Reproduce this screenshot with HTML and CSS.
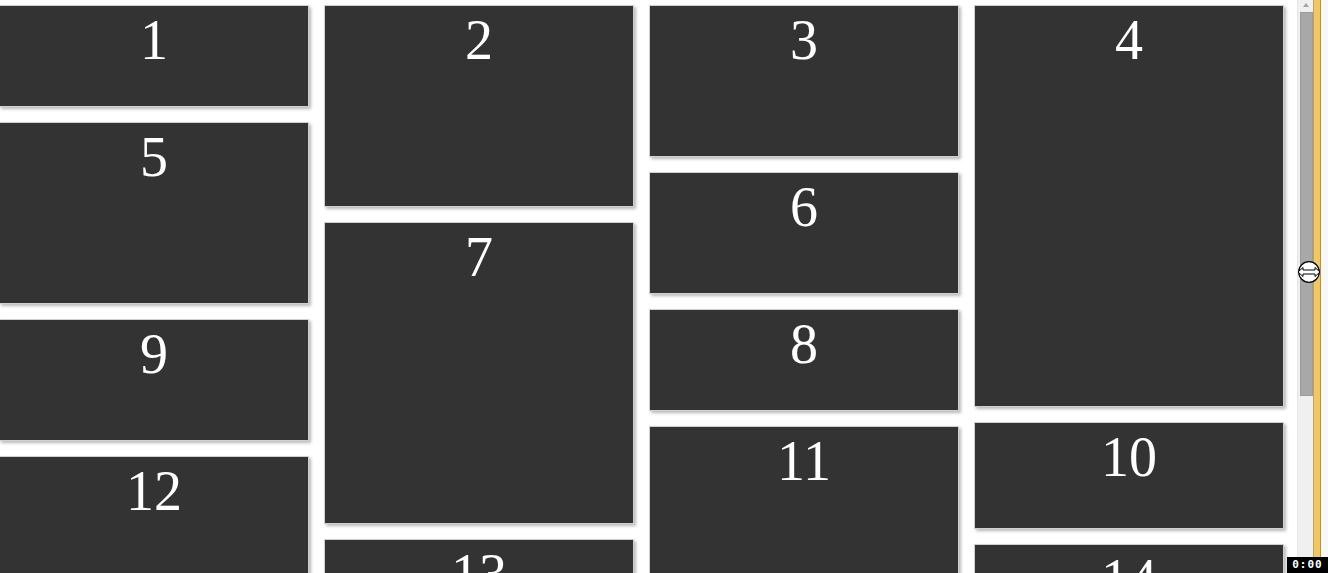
FILE: index.html
```html
<!DOCTYPE html>
<html lang="en">
<head>
<meta charset="UTF-8">
<meta name="viewport" content="width=device-width, initial-scale=1.0">
<title>Masonry Boxes</title>
<link rel="stylesheet" href="styles.css">
</head>
<body>
  <div class="screen">
    <div class="page">
      <div class="wall">
        <!-- column 1 -->
        <div class="col">
          <div class="box h100"><span class="num">1</span></div>
          <div class="box h180"><span class="num">5</span></div>
          <div class="box h120"><span class="num">9</span></div>
          <div class="box h150"><span class="num">12</span></div>
        </div>
        <!-- column 2 -->
        <div class="col">
          <div class="box h200"><span class="num">2</span></div>
          <div class="box h300"><span class="num">7</span></div>
          <div class="box h200"><span class="num">13</span></div>
        </div>
        <!-- column 3 -->
        <div class="col">
          <div class="box h150"><span class="num">3</span></div>
          <div class="box h120"><span class="num">6</span></div>
          <div class="box h100"><span class="num">8</span></div>
          <div class="box h200"><span class="num">11</span></div>
        </div>
        <!-- column 4 -->
        <div class="col">
          <div class="box h400"><span class="num">4</span></div>
          <div class="box h105"><span class="num">10</span></div>
          <div class="box h120"><span class="num">14</span></div>
        </div>
      </div>
    </div>

    <div class="scrollbar">
      <div class="arrow-up"></div>
      <div class="thumb"></div>
    </div>
    <div class="edge"></div>
    <div class="rest"></div>

    <!-- resize cursor over the scrollbar -->
    <svg class="cursor" width="24" height="22" viewBox="0 0 24 22">
      <circle cx="12" cy="11" r="10.3" fill="#fff" stroke="#000" stroke-width="1.2"/>
      <path d="M1 11 L6 6.5 L6 9 L18 9 L18 6.5 L23 11 L18 15.5 L18 13 L6 13 L6 15.5 Z" fill="#fff" stroke="#000" stroke-width="1" stroke-linejoin="round"/>
    </svg>

    <div class="timer">0:00</div>
  </div>
</body>
</html>
```

FILE: styles.css
```css
html, body {
  margin: 0;
  padding: 0;
  background: #fff;
  overflow: hidden;
}

.screen {
  display: flex;
  height: 573px;
  position: relative;
  overflow: hidden;
}

.page {
  flex: 1;
  overflow: hidden;
}

.wall {
  display: flex;
  gap: 15px;
  padding-top: 5px;
  margin-left: -1px;
}

.col {
  display: flex;
  flex-direction: column;
  gap: 15px;
  width: 310px;
  flex-shrink: 0;
}

.box {
  background-color: #333;
  border: 1px solid #d0d0d0;
  box-shadow: 2px 2px 3px rgba(0, 0, 0, 0.28);
  text-align: center;
  color: #fff;
  overflow: hidden;
}

.num {
  display: block;
  padding-top: 2px;
  font-family: "Liberation Serif", "Times New Roman", serif;
  font-size: 56px;
  line-height: normal;
}

.h100 { height: 100px; }
.h105 { height: 105px; }
.h120 { height: 120px; }
.h150 { height: 150px; }
.h180 { height: 180px; }
.h200 { height: 200px; }
.h300 { height: 300px; }
.h400 { height: 400px; }

/* fake window scrollbar */
.scrollbar {
  width: 15px;
  flex-shrink: 0;
  background-color: #f0f0f0;
  border-left: 1px solid #e6e6e6;
  display: flex;
  flex-direction: column;
  align-items: center;
}

.arrow-up {
  margin-top: 3px;
  width: 0;
  height: 0;
  border-left: 3px solid transparent;
  border-right: 3px solid transparent;
  border-bottom: 4px solid #a3a3a3;
}

.thumb {
  margin-top: 5px;
  margin-left: 1px;
  width: 11px;
  height: 382px;
  background-color: #a8a8a8;
  border: 1px solid #9a9a9a;
}

.edge {
  width: 6px;
  flex-shrink: 0;
  background-color: #f0c766;
  border-left: 1px solid #c9a24c;
  border-right: 1px solid #b9913c;
}

.rest {
  width: 7px;
  flex-shrink: 0;
  background-color: #f7f7f7;
}

.cursor {
  position: absolute;
  left: 1297px;
  top: 261px;
}

.timer {
  position: absolute;
  right: 0;
  bottom: 0;
  width: 41px;
  height: 16px;
  background: #000;
  color: #fff;
  font-family: "DejaVu Sans Mono", monospace;
  font-weight: bold;
  font-size: 11px;
  letter-spacing: 1px;
  line-height: 16px;
  text-align: center;
}
```
